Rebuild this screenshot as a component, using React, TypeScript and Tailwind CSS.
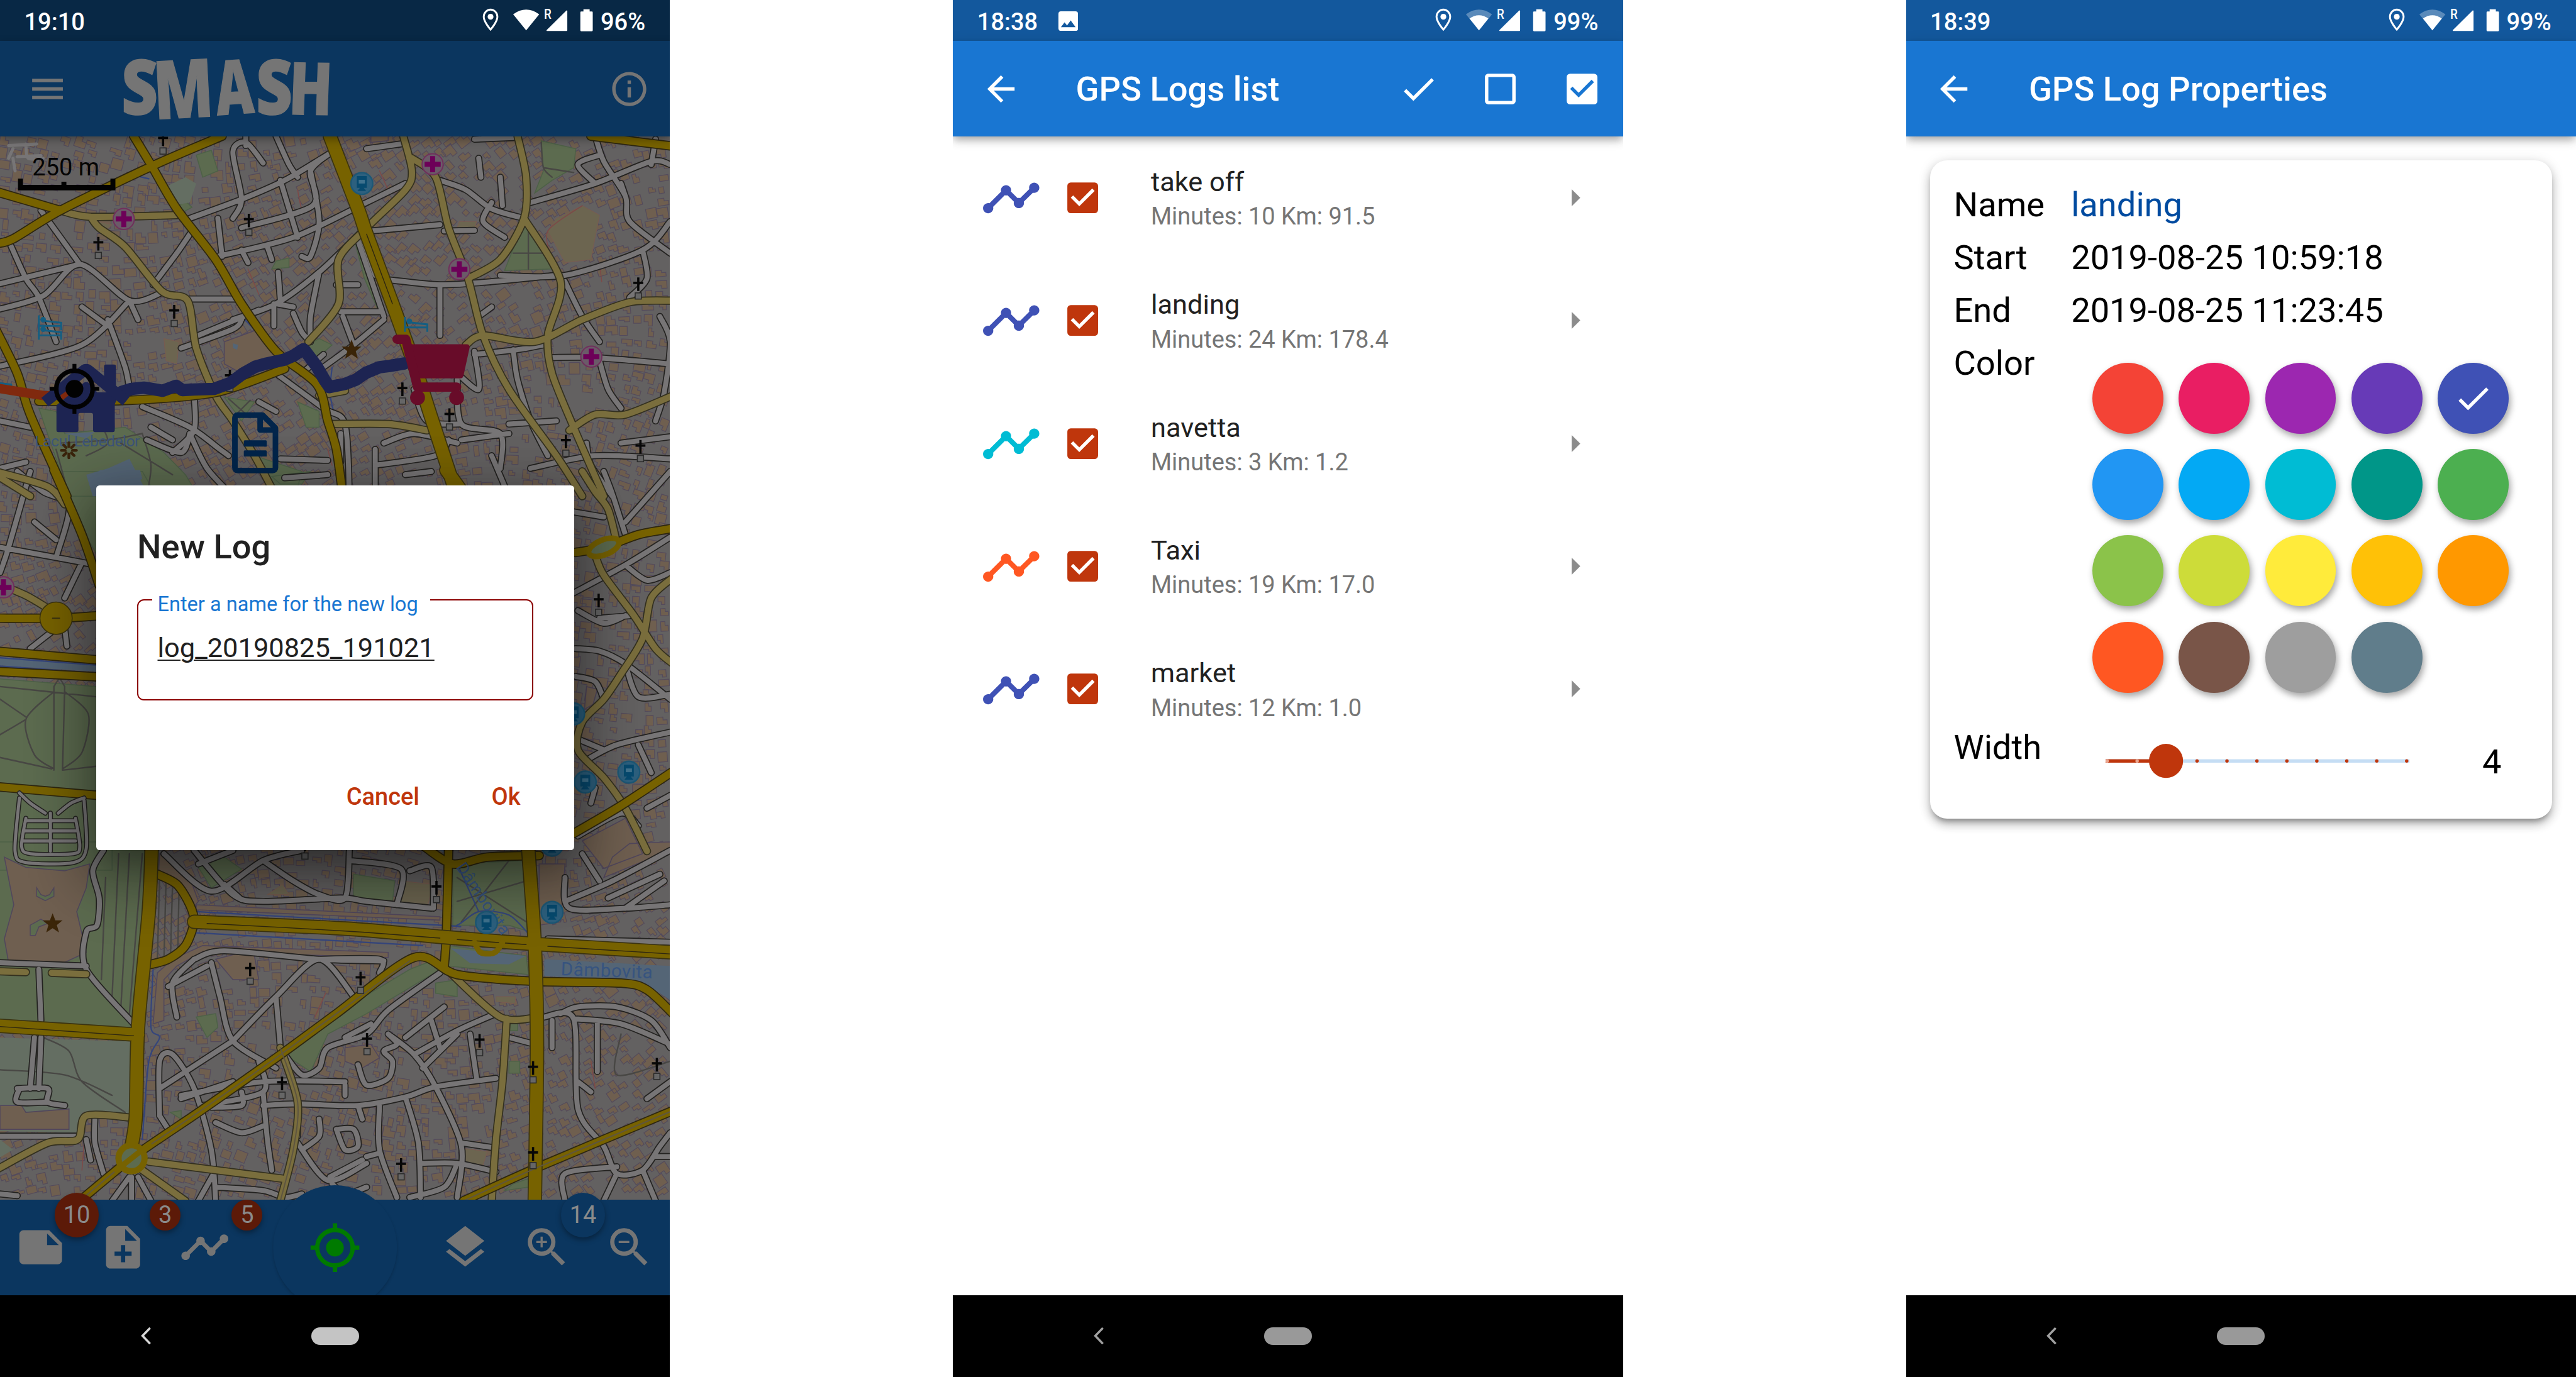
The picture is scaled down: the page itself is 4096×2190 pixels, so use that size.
import React from "react";
import {
  MdArrowBack,
  MdArrowRight,
  MdCheck,
  MdCheckBox,
  MdCheckBoxOutlineBlank,
  MdInfoOutline,
  MdLayers,
  MdMenu,
  MdMyLocation,
  MdNote,
  MdNoteAdd,
  MdTimeline,
  MdZoomIn,
  MdZoomOut,
} from "react-icons/md";

/* ---------- map geometry ---------- */

type Sheet = "A" | "B" | "C";

// Each survey sheet has its own digitising grid: x/y divisors and a y origin.
const SHEETS: Record<Sheet, [number, number, number]> = {
  A: [1.4385, 1.96, 0],
  B: [1.4385, 2.45, 760],
  C: [1.4385, 1.8233, 1360],
};

function pt(sheet: Sheet, x: number, y: number): [number, number] {
  const [sx, sy, oy] = SHEETS[sheet];
  return [x / sx, y / sy + oy];
}

const f = (n: number) => n.toFixed(1);

function curve(points: [number, number][]): string {
  let d = `M${f(points[0][0])} ${f(points[0][1])}`;
  for (let i = 0; i < points.length - 1; i++) {
    const p0 = points[i - 1] ?? points[i];
    const p1 = points[i];
    const p2 = points[i + 1];
    const p3 = points[i + 2] ?? p2;
    const k = 7;
    d += `C${f(p1[0] + (p2[0] - p0[0]) / k)} ${f(p1[1] + (p2[1] - p0[1]) / k)} ${f(
      p2[0] - (p3[0] - p1[0]) / k
    )} ${f(p2[1] - (p3[1] - p1[1]) / k)} ${f(p2[0])} ${f(p2[1])}`;
  }
  return d;
}

function parse(sheet: Sheet, s: string): [number, number][] {
  return s
    .trim()
    .split(/\s+/)
    .map((q) => {
      const [x, y] = q.split(",").map(Number);
      return pt(sheet, x, y);
    });
}

const lines = (sheet: Sheet, s: string) =>
  s
    .split("|")
    .map((l) => curve(parse(sheet, l)))
    .join("");

const areas = (sheet: Sheet, s: string) =>
  s
    .split("|")
    .map(
      (l) =>
        "M" +
        parse(sheet, l)
          .map((p) => `${f(p[0])} ${f(p[1])}`)
          .join("L") +
        "Z"
    )
    .join("");

const MINOR =
  lines(
    "A",
    `-10,980 100,935 185,835 300,950 375,925|185,835 95,665|300,950 190,1090 -10,1160|430,945 550,945|185,835 -10,900
    |20,760 60,880 90,940 130,1080|300,950 320,1010|250,1010 290,1160 300,1230|190,970 230,1010 250,1030|355,900 410,800 440,740
    |430,695 560,630 660,570 770,480|540,690 560,630 540,480 570,450 610,515|570,430 570,460|640,430 670,520 690,560|770,480 720,540 725,650 560,720 
    |505,810 680,750 850,640 940,580|505,690 515,810|560,790 575,830|650,570 690,750|620,780 630,820
    |540,1010 640,960 740,860 840,730|640,960 680,970|635,960 635,1030|740,860 720,1000 720,1080|645,860 650,950|680,990 700,1050 720,1080
    |780,900 830,900|790,985 880,985|820,1090 795,1000|890,1010 820,1090 750,1160|830,760 860,880 890,1000 |840,750 870,870
    |720,540 740,700 720,810 700,810|460,1060 600,980|420,1100 540,1040 560,1010
    |860,730 1020,710|1030,730 1100,728|905,885 1020,900 1140,890 1290,870|1020,900 1020,1060|1110,1000 1140,970
    |1110,500 1115,560|850,470 930,455|1020,570 1080,600 1140,660 1215,690|1140,640 1120,700 1170,750|1160,560 1165,650
    |1230,640 1380,580 1510,510 1554,520|1380,580 1340,520 1390,490|1380,430 1400,510 1450,620 1460,700 1554,800|1450,620 1440,580
    |1510,520 1520,440|1554,700 1490,790 1310,870 1160,870|1310,890 1350,1000 1390,1080|1490,790 1500,880 1460,940
    |1100,440 1190,435|1100,1120 1200,1105 1260,1090|1100,1110 1110,1230 1060,1180|1190,1105 1200,1200 1230,1330 1270,1440
    |1280,1130 1380,1130 1554,1150|1530,1000 1554,1080 1540,1240 1520,1330|1390,1140 1410,1230 1440,1290|960,1230 990,1330 1070,1340
    |1060,1200 1070,1340 1160,1370 1160,1480|1070,1390 1180,1370|1180,1340 1290,1330|890,1400 960,1370 1060,1400
    |0,1330 70,1350|0,1480 60,1460|330,1285 440,1350 510,1420 530,1440|450,1250 450,1360 400,1430|340,1390 420,1430 440,1370
    |440,1370 480,1480 540,1568|350,1350 400,1390|640,1180 750,1290 800,1340 810,1568|700,1180 750,1120|600,1270 640,1300
    |790,1370 790,1460|870,1420 870,1568|870,1470 1010,1440 1040,1390|940,1500 1000,1490|1230,1480 1380,1440 1554,1450|1360,1400 1370,1470 1420,1568
    |1140,1440 1180,1568|650,1450 760,1455|660,1510 760,1500|1440,1400 1554,1380`
  ) +
  lines(
    "B",
    `0,300 130,340 223,370|70,0 20,300 0,400|80,200 130,270|40,0 100,80 160,140 130,340|190,360 150,500|130,620 70,700|150,620 155,690
    |1330,480 1450,370 1554,260|1400,0 1420,90 1450,250|1340,550 1400,600 1450,570|1450,370 1500,430 1554,400|1460,570 1390,580
    |1335,700 1390,710 1450,760 1554,900|1450,760 1480,890 1554,880|1335,810 1380,830 1400,900|1360,1140 1430,1080 1554,1030|1480,1080 1510,1190
    |1330,1050 1400,1100|1500,1330 1554,1280|1554,0 1450,200|1330,160 1400,180|1370,1310 1380,1250|1340,1440 1440,1350 1480,1400`
  ) +
  lines(
    "C",
    `450,20 540,150 610,170 790,160 850,170 1000,190|380,30 490,140 610,50 700,20|610,50 680,110 740,150 800,160 810,20|810,50 930,75 920,180
    |950,80 1000,70 1005,190|520,120 560,165|540,20 460,60
    |450,340 520,315 740,340 890,345|450,340 400,410 410,510|490,350 510,450 540,580 640,660|480,360 390,420|540,580 640,450 740,340 820,450|540,580 370,720
    |640,450 650,600|740,340 880,340 880,380|420,740 610,700 800,700|470,770 610,730 600,640|370,800 370,640 400,620 450,720 490,900 500,1050
    |610,730 620,870 630,960|500,820 560,850 610,830|610,770 690,765 830,770 940,745 1010,715 1150,690|690,880 760,990 850,940|690,765 690,860
    |740,810 740,860 700,900|780,840 820,840 830,890 800,900 780,840|830,770 840,810|880,770 880,900 920,1040|850,920 880,910|940,745 970,880 975,1040
    |660,620 700,680 740,660 760,600 850,560 900,490 1020,380|800,570 860,530|830,650 850,710 900,690 910,640 890,610 920,590 900,560
    |900,560 960,620 1010,715 1070,890 1060,1040|940,570 1030,480|960,620 1060,550 1150,500|1000,520 1020,600|980,660 1060,560|1090,560 1105,690
    |1070,880 1150,895|980,940 1060,940 1150,965|1060,940 1030,1010 950,1040|765,980 840,930|770,1000 800,1030 850,1010
    |1180,570 1240,590|1260,510 1330,515 1340,780 1400,890 1430,970 1490,960 1530,890 1554,850|1330,515 1440,530 1554,590|1300,500 1340,480 1430,480 1510,520 1554,600
    |1280,520 1280,600|1385,520 1385,670|1500,750 1554,700|1340,700 1370,730|1310,1050 1310,970 1430,950|1400,1050 1430,970|1490,960 1520,1050|1554,920 1520,920
    |1310,100 1320,190 1450,190 1554,180|1310,170 1420,110 1554,20|1350,30 1390,110|1410,160 1530,90|1450,190 1540,110|1270,280 1554,290
    |240,20 215,80 230,160 225,240 200,260 200,370 310,530|0,350 200,360|90,370 95,520|80,570 70,720|95,570 90,720|40,720 110,720 110,760 150,770|45,720 40,760 110,760
    |0,860 180,860|220,810 220,880 240,970|200,870 210,930|300,980 260,1050|305,980 305,1050|320,980 350,1050|500,960 460,1050|0,1030 40,1035|420,750 540,700|800,710 800,740
    |390,840 370,800|560,730 560,770 490,775|700,1030 660,1040 610,1020 500,1010`
  );

const SECONDARY =
  lines(
    "A",
    `140,665 210,685 410,680|210,685 230,720 290,780 375,920 435,950 455,1100 500,1250 540,1330 590,1440 640,1568
    |935,430 955,540 940,600 850,720 785,820 785,960 715,1080|955,500 1010,560 1040,720 1085,880 1120,1060 1180,1230 1290,1440 1350,1568
    |1200,430 1220,560 1215,690 1160,820 1085,880|1215,690 1300,890 1270,1060 1280,1180 1330,1350 1400,1568
    |1080,1090 1120,1060 1240,1080 1350,1010 1460,955 1560,950|770,1340 900,1340 990,1360|1320,1360 1380,1310 1450,1310 1560,1250|-10,1500 70,1568|740,1250 800,1235`
  ) +
  lines(
    "B",
    `-10,0 110,60 150,130|1350,0 1380,80 1410,150 1430,280|1380,330 1400,410 1470,570 1520,700 1560,760
    |1560,420 1510,500 1490,660 1440,800 1400,900 1350,990 1340,1100 1400,1210 1450,1330 1500,1500|-10,440 60,490 110,540`
  ) +
  lines(
    "C",
    `1040,375 1160,510 1250,510|1175,515 1165,700 1150,870 1140,1050|345,935 500,960 655,985|650,600 690,760 680,900 650,1050
    |330,960 430,1050|-10,960 110,880 180,870 200,800 300,805|-10,375 60,378|120,380 200,384`
  );

const MAJOR_THIN =
  lines(
    "A",
    `310,430 352,525 410,660 500,820 560,960 640,1110 735,1215 760,1330 780,1420 795,1568|-10,770 30,755 140,665 352,525 515,430|-10,605 140,665
    |1370,430 1560,462|-10,1040 40,1180 70,1310 155,1568|90,1268 300,1265 500,1240 660,1165`
  ) +
  lines(
    "B",
    `125,-5 190,250 230,450|1335,320 1400,300 1480,250 1560,225|-10,580 130,580 230,570|-10,1245 230,1280|1330,1430 1440,1320 1560,1185|-10,710 230,745|-10,790 230,812`
  ) +
  lines(
    "C",
    `365,90 410,120 440,180 450,230 430,300 390,340 350,355|1040,20 1035,270 1030,360|985,10 1050,60 1130,40 1250,35
    |190,1045 310,920 460,790 640,630 780,500 960,335 1060,385 1240,405 1440,410 1500,430 1560,500|1075,1050 1250,950 1560,785`
  );

const MAJOR_WIDE =
  lines("A", "765,430 830,660 850,740 910,960 960,1150 1000,1320 1060,1568") +
  lines("B", "1035,-5 1075,90") +
  lines("C", "352,0 345,200 320,540 315,800 305,890|450,230 800,250 1030,275 1240,295 1560,320|1225,20 1240,300 1245,600 1240,1050|-10,535 320,562");

const PARK =
  areas(
    "A",
    `455,490 490,475 505,540 470,560|1255,445 1335,470 1330,530 1280,570 1240,610 1260,540|1215,700 1280,850 1170,855|520,1255 590,1270 560,1330
    |150,1370 290,1350 380,1430 430,1500 460,1568 160,1568 90,1290 130,1300|700,1100 740,1070 770,1090 720,1150|640,825 670,815 670,845 630,850
    |820,750 885,960 875,975 845,880|415,650 430,635 445,655 425,670|690,1270 740,1300 740,1350 710,1350|590,1440 700,1490 690,1540 620,1530`
  ) +
  areas("B", "130,0 330,0 350,60 250,60 250,400 180,200|-10,818 260,855 260,1270 -10,1238|-10,1260 260,1300 260,1575 -10,1575|630,20 720,0 700,50 650,50") +
  areas(
    "C",
    `-10,-5 350,-5 345,200 320,545 -10,520|660,620 700,560 950,370 1000,345 1020,370 850,500 760,560 720,670|1050,60 1220,50 1230,260 1180,240 1050,240
    |1040,300 1220,330 1225,385 1040,360|820,90 915,110 910,170 820,160|455,60 520,40 560,75 490,130|455,510 500,500 505,540 480,570|1010,410 1060,400 1060,450 1010,440
    |1180,520 1200,520 1200,550 1180,550|395,790 420,785 420,810|1180,640 1205,640 1205,675 1180,675|1190,1000 1225,985 1225,1010 1170,1020`
  );

const PALE_PARK = areas("C", "-10,570 320,582 300,800 190,790 180,850 -10,845|-10,860 30,900 -10,930") + areas("A", "430,560 455,580 440,640 400,650 385,590");

const BEIGE =
  areas("A", "520,1080 600,1040 640,1130 560,1180 520,1150|860,430 900,430 900,445 860,450") +
  areas("B", "1350,1460 1450,1370 1490,1510 1400,1568|1360,850 1385,860 1375,920 1355,940") +
  areas(
    "C",
    `10,40 60,70 150,80 208,60 200,130 178,200 200,320 140,355 20,350 10,280 32,180|800,600 860,590 880,630 840,660 800,640|500,340 560,320 590,330 600,400 540,400
    |370,30 440,100 460,170 440,200 400,110 368,80|1250,60 1310,60 1300,230 1250,240|1420,40 1460,0 1554,-5 1554,20 1400,100|0,770 50,770 60,790 160,780 160,840 0,840
    |455,180 1020,215 1020,225 455,195|365,380 400,340 470,300 900,320 900,335 470,318 410,360 380,400 380,520 355,530`
  );

const YELLOW_LOT =
  areas("A", "1290,690 1350,650 1390,680 1370,820 1310,830 1270,730|380,1070 415,1080 410,1150 385,1140|1065,700 1105,700 1100,725 1060,720|230,700 260,710 240,735") +
  areas("C", "930,110 1005,120 990,190 920,175|620,150 670,150 655,120|1070,895 1130,905 1120,945 1065,935|1150,450 1195,450 1195,470 1150,465");

const WATER =
  areas("A", "200,1500 250,1480 300,1450 345,1568 215,1568|540,1085 552,1090 550,1105 540,1100|150,1370 220,1365 200,1385") +
  areas("B", "230,-5 325,-5 330,30 300,55 260,55|-10,735 260,770 260,795 -10,765") +
  areas("C", "1262,340 1554,360 1554,460 1500,415 1440,400 1262,390|1045,308 1220,330 1180,355 1090,352|1100,270 1130,255 1165,270 1150,300 1115,300|1000,10 1060,10 1035,30");

const STREAM =
  lines("A", "770,1160 765,1240 775,1310|560,1000 640,1110|300,550 345,565|865,720 890,735") +
  lines("C", "455,200 1020,240 1060,240 1110,200 1180,210 1225,265|450,262 980,300|355,370 350,540 370,570 345,640 330,870|1060,60 1110,200") +
  lines("B", "-10,735 260,770|-10,768 260,800");

const PATHS =
  lines("A", "140,1400 250,1390 330,1370|230,1330 250,1400 200,1440|130,1420 160,1568|330,1370 350,1470 340,1568|280,1400 400,1500|530,1260 580,1320|580,1265 540,1320|1260,530 1330,545|1280,560 1260,530 1255,450|1225,700 1225,850|1190,800 1260,800") +
  lines(
    "B",
    "125,850 125,1180|150,850 145,1180|125,850 138,820 150,850|125,870 60,980 80,1120 125,1175|150,870 205,960 190,1110 145,1175|0,900 60,970|0,1040 60,980|0,1130 120,1175|223,1165 145,1180|0,850 223,890"
  ) +
  lines("C", "300,30 280,490|275,30 260,450|330,30 300,500|245,100 235,400|100,570 160,610 190,700 290,790|0,665 150,680 260,740|1060,100 1220,230|1180,50 1070,230|1060,170 1220,110|1440,560 1430,680 1554,640|370,100 365,340|385,110 380,345|400,120 395,340|415,140 412,330");

const RED_WALKS = lines("A", "690,600 700,660 720,670|880,540 900,600|1390,830 1395,890|575,850 600,930|770,1470 760,1420|1280,820 1270,730 1350,650") + lines("C", "755,440 730,510|195,880 190,960|1370,640 1380,720");

// Small footprints scattered on a jittered grid; the seed is fixed so the map never changes.
const HOUSES = (() => {
  let seed = 9241;
  const rnd = () => {
    seed = (seed * 1103515245 + 12345) & 0x7fffffff;
    return seed / 0x7fffffff;
  };
  let d = "";
  for (let y = 226; y < 1936; y += 19) {
    for (let x = 4; x < 1080; x += 20) {
      if (rnd() < 0.22) continue;
      const cx = x + rnd() * 7;
      const cy = y + rnd() * 7;
      const a = 0.5 * Math.sin(cx / 190 + cy / 330) - 0.25 + 0.15 * Math.sin(cy / 90);
      const w = 4 + rnd() * 6;
      const h = 4 + rnd() * 5.5;
      const cos = Math.cos(a);
      const sin = Math.sin(a);
      const n = rnd();
      const shape: [number, number][] =
        n < 0.5
          ? [[-w, -h], [w, -h], [w, h], [0, h], [0, h * 0.3], [-w, h * 0.3]]
          : n < 0.75
            ? [[-w, -h], [w, -h], [w, h], [-w, h]]
            : [[-w, -h], [w * 0.2, -h], [w * 0.2, -h * 0.2], [w, -h * 0.2], [w, h], [-w, h]];
      d += "M" + shape.map(([u, v]) => `${f(cx + u * cos - v * sin)} ${f(cy + u * sin + v * cos)}`).join("L") + "Z";
    }
  }
  return d;
})();

const CHURCHES: [Sheet, number, number][] = [
  ["A", 378, 440], ["A", 577, 697], ["A", 228, 770], ["A", 404, 985], ["A", 1480, 898], ["A", 933, 1230],
  ["A", 1042, 1312], ["A", 1312, 1395], ["A", 1485, 1412], ["A", 533, 1190], ["B", 1388, 510], ["C", 707, 2],
  ["C", 1012, 130], ["C", 580, 370], ["C", 836, 397], ["C", 851, 577], ["C", 1112, 580], ["C", 1236, 660],
  ["C", 1523, 650], ["C", 654, 705], ["C", 930, 945], ["C", 1236, 912],
];
const CLINICS: [Sheet, number, number][] = [["A", 1003, 519], ["A", 287, 692], ["A", 1065, 851], ["A", 1371, 1127], ["B", 8, 458]];
const TRAMS: [Sheet, number, number][] = [
  ["A", 839, 580], ["B", 1330, 958], ["B", 1458, 1188], ["B", 1357, 1227], ["C", 1280, 5], ["C", 1128, 232], ["C", 1280, 202],
];
const HOTELS: [Sheet, number, number][] = [["A", 116, 1020], ["A", 116, 1050], ["A", 965, 1025], ["A", 0, 1215]];
const STARS: [Sheet, number, number][] = [["A", 815, 1106], ["C", 122, 236]];

const at = ([s, x, y]: [Sheet, number, number]) => {
  const [px, py] = pt(s, x, y);
  return `translate(${f(px)} ${f(py)})`;
};

function Road({ d, width, fill, casing }: { d: string; width: number; fill: string; casing: string }) {
  return (
    <>
      <path d={d} stroke={casing} strokeWidth={width + 3.4} />
      <path d={d} stroke={fill} strokeWidth={width} />
    </>
  );
}

function CityMap() {
  const [rx, ry] = pt("C", 305, 925);
  const [qx, qy] = pt("B", 130, 580);
  return (
    <svg viewBox="0 220 1080 1714" className="block h-full w-full" fontFamily="Roboto, sans-serif">
      <rect x="0" y="220" width="1080" height="1716" fill="#636161" />
      <path d={HOUSES} fill="#6f5f4f" stroke="#544b5c" strokeWidth="1.2" />
      <path d={PARK} fill="#5c6b4f" stroke="#4d6147" strokeWidth="1.5" />
      <path d={PALE_PARK} fill="#646e62" />
      <path d={YELLOW_LOT} fill="#6c6550" stroke="#7a5a50" strokeWidth="1" />
      <path d={BEIGE} fill="#6f5f50" stroke="#51475c" strokeWidth="1.6" />
      <path d={WATER} fill="#546576" />
      <path d={areas("C", "85,130 85,155 105,168 125,155 125,130 115,150 105,155 95,150|70,270 70,240 95,222 110,235 90,245 82,270")} fill="#5c6b4f" stroke="#51475c" strokeWidth="1.5" />
      <g fill="none" strokeLinecap="round" strokeLinejoin="round">
        <path d={PATHS} stroke="#484744" strokeWidth="2.4" />
        <path d={RED_WALKS} stroke="#7d4a48" strokeWidth="1.6" />
        <path d={STREAM} stroke="#34457c" strokeWidth="2.2" />
        <Road d={MINOR} width={8} fill="#777576" casing="#232220" />
        <Road d={SECONDARY} width={10} fill="#7a6e3d" casing="#33301f" />
        <Road d={MAJOR_THIN} width={12} fill="#776200" casing="#2e2710" />
        <Road d={MAJOR_WIDE} width={20} fill="#776200" casing="#3b3310" />
        <path d={lines("C", "190,1045 310,920 460,790 640,630 780,500 950,345|1075,1050 1250,950 1560,785|650,600 690,760 680,900 650,1050")} stroke="#5e5540" strokeWidth="2" />
        <path d={lines("C", "480,235 800,257 1020,278|1060,282 1220,297|1270,302 1560,325|-10,537 310,565") + lines("A", "850,740 910,960")} stroke="#2e2710" strokeWidth="1.4" />
        <circle cx={rx} cy={ry} r="21" fill="#5c6b4f" stroke="#776200" strokeWidth="10" />
        <path d={lines("C", "270,960 345,885")} stroke="#776200" strokeWidth="9" />
        <circle cx={qx} cy={qy} r="26" fill="#776200" stroke="#3b3310" strokeWidth="1.5" />
        <path d={lines("B", "122,580 138,580")} stroke="#3b3310" strokeWidth="2" />
        <path d={lines("C", "1100,290 1112,318 1130,324 1150,318 1165,290")} stroke="#776200" strokeWidth="9" />
        <ellipse cx={pt("B", 1400, 300)[0]} cy={pt("B", 1400, 300)[1]} rx="26" ry="12" transform={`rotate(-22 ${f(pt("B", 1400, 300)[0])} ${f(pt("B", 1400, 300)[1])})`} fill="#5c6b4f" stroke="#776200" strokeWidth="9" />
        <g strokeWidth="5" stroke="#777576">
          <path d={lines("B", "45,1270 70,1310 105,1350|195,1290 165,1310 135,1350|45,1290 35,1500 60,1545 170,1545 200,1490 195,1300|60,1370 50,1480 70,1510 170,1510 185,1480 175,1370|60,1380 170,1380|58,1420 175,1420|55,1460 175,1460|117,1350 117,1500")} stroke="#232220" strokeWidth="8" />
          <path d={lines("B", "45,1270 70,1310 105,1350|195,1290 165,1310 135,1350|45,1290 35,1500 60,1545 170,1545 200,1490 195,1300|60,1370 50,1480 70,1510 170,1510 185,1480 175,1370|60,1380 170,1380|58,1420 175,1420|55,1460 175,1460|117,1350 117,1500")} />
          <path d={lines("A", "20,460 85,455|20,500 30,470|60,455 65,500 100,500|30,500 35,540|40,495 95,492")} />
        </g>
      </g>

      <g fill="#37547f" fontSize="25" letterSpacing="0.5">
        <text x={pt("C", 1300, 390)[0]} y={pt("C", 1300, 387)[1]} fontSize="30" transform="rotate(2 903 1572)">
          Dâmbovita
        </text>
        <text transform={`translate(${f(pt("C", 1056, 70)[0])} ${f(pt("C", 1056, 70)[1])}) rotate(56)`} fontSize="27">
          Dâmbovita
        </text>
        <text x="56" y="720" fontSize="25" fill="#3d5478" textLength="170">
          Lacul Lebedelor
        </text>
      </g>

      {CHURCHES.map((c, i) => (
        <g key={i} transform={at(c)}>
          <path d="M-1.8-11h3.6v7H8v3.8H1.8V11h-3.6V-.2H-8V-4h6.2z" fill="#070707" />
          <rect x="-5" y="14" width="10" height="10" fill="#666" stroke="#2b2b2b" strokeWidth="1.6" />
        </g>
      ))}
      {CLINICS.map((c, i) => (
        <g key={i} transform={at(c)}>
          <circle r="17" fill="#6b5a68" stroke="#70305c" strokeWidth="2" />
          <path d="M-4-13h8v9h9v8H4v9h-8V4h-9v-8h9z" fill="#6d0058" />
        </g>
      ))}
      {TRAMS.map((c, i) => (
        <g key={i} transform={at(c)}>
          <circle r="17.5" fill="#2d607e" stroke="#1d5876" strokeWidth="2.5" />
          <path d="M-8-12h16v19H-8zM-7 12l4-5h6l4 5z" fill="#074a6f" />
          <path d="M-5-6h10v6H-5z" fill="#3f728e" />
        </g>
      ))}
      {HOTELS.map((c, i) => (
        <g key={i} transform={at(c)} fill="none" stroke="#145e82" strokeWidth="3">
          <path d="M-18-12V12M-18 5H18V12M18 5V0L-8-3" />
          <circle cx="-11" cy="-5" r="3" fill="#145e82" />
        </g>
      ))}
      {STARS.map((c, i) => (
        <path key={i} transform={at(c)} d="M0-17L4.400-5.500H16L6.800 2 10.300 14 0 7-10.300 14-6.800 2-16-5.500H-4.400z" fill="#3b2508" />
      ))}
      <g transform="translate(111 726)" stroke="#3a240c" strokeWidth="4.500" strokeLinecap="round">
        {[0, 45, 90, 135, 180, 225, 270, 315].map((r) => (
          <path key={r} d="M0-6V-12" transform={`rotate(${r})`} />
        ))}
      </g>

      {/* recorded tracks */}
      <g fill="none" strokeLinecap="round" strokeLinejoin="round">
        <path d="M-10 625L40 633 72 638 100 637 118 622" stroke="#80290e" strokeWidth="15" />
        <path
          d="M196 632L212 627 232 625 262 630 284 622 294 629 312 628 345 627 372 617 392 602 412 591 430 586 458 580 474 573 489 563 492 566 510 590 524 614 531 624 556 619 574 612 590 601 612 592 628 590 652 586"
          stroke="#1d2452"
          strokeWidth="20"
        />
      </g>

      {/* market */}
      <g fill="#680c29">
        <path d="M652 555H752q5 0 5 5L747 606q-1 4-5 4H664z" />
        <path d="M640 547H654L673 624H736" fill="none" stroke="#680c29" strokeWidth="15" strokeLinecap="round" strokeLinejoin="round" />
        <circle cx="673" cy="641" r="12" />
        <circle cx="736" cy="641" r="12" />
      </g>

      {/* home, position and note markers */}
      <g transform="translate(60 520) scale(.3333)">
        <path d="M93 520V400L225 292q12-9 24 0L290 338H400L375 395V520q0 10-10 10H280q-10 0-10-10V447q0-10-10-10H209q-10 0-10 10V520q0 10-10 10H103q-10 0-10-10z" fill="#1d2452" />
        <path d="M323 213q0-10 10-10H371q10 0 10 10V350L323 300z" fill="#1d2452" />
        <path d="M37 385L226 232q11-9 22 0L430 380" fill="none" stroke="#1d2452" strokeWidth="54" strokeLinejoin="round" />
        <path d="M118 362L150 340" stroke="#80290e" strokeWidth="24" />
        <circle cx="180" cy="321" r="88" fill="none" stroke="#020202" strokeWidth="22" />
        <circle cx="180" cy="321" r="43" fill="#020202" />
        <path d="M180 200V240M180 402V441M60 321H90M270 321H300" stroke="#020202" strokeWidth="19" />
        <g fill="none" stroke="#02254b" strokeWidth="27" strokeLinejoin="round">
          <path d="M970 448H1090L1152 510V702q0 14-14 14H970q-14 0-14-14V462q0-14 14-14z" />
          <path d="M1078 450V520H1150" />
        </g>
        <path d="M1004 570H1105q5 0 5 5V600H999V575q0-5 5-5zM1004 618H1105q5 0 5 5V648H999V623q0-5 5-5z" fill="#02254b" />
      </g>

      {/* scale bar */}
      <path d="M29 288h8v10h62v-5h8v5h71v-10h8v19H29z" fill="#020202" />
      <text x="52" y="283" fontSize="38.500" fill="#050505">
        250 m
      </text>
    </svg>
  );
}

/* ---------- shared chrome ---------- */

function StatusIcons({ weak }: { weak?: boolean }) {
  return (
    <svg viewBox="770 0 192 66" className="h-6 w-[69.820px]" fill="#fff">
      <path d="M790.300 15.500a11 11.500 0 0 0-11 11.700c0 8 11 20.500 11 20.500s11-12.500 11-20.500a11 11.500 0 0 0-11-11.700z" fill="none" stroke="#fff" strokeWidth="3" />
      <circle cx="790.300" cy="27" r="4.700" />
      {weak ? (
        <>
          <path d="M847.700 49L826.700 23q21-15 42 0z" opacity=".3" />
          <path d="M847.700 49L832.500 30q15.200-11 30.400 0z" />
        </>
      ) : (
        <path d="M847.700 49L826.700 23q21-15 42 0z" />
      )}
      <text x="876.500" y="30" fontSize="22" fontFamily="Roboto, sans-serif" textLength="12" lengthAdjust="spacingAndGlyphs">
        R
      </text>
      <path d="M914 18.500V49q0 1-1 1H882q-2.500 0-1-1.800L912.500 17q1.500-1 1.500 1.500z" />
      <path d="M940 15h10v3.500h3.500q1.500 0 1.500 1.500v29q0 1.500-1.500 1.500h-17q-1.500 0-1.500-1.500V20q0-1.500 1.500-1.500h3.500z" />
    </svg>
  );
}

function StatusBar({ time, level, weak, photo, tone }: { time: string; level: string; weak?: boolean; photo?: boolean; tone: string }) {
  return (
    <div className={`flex h-6 shrink-0 items-center pt-[1.500px] pr-[14.500px] pl-[14.200px] text-[14px] leading-none font-medium text-white ${tone}`}>
      <span>{time}</span>
      {photo && (
        <svg viewBox="0 0 32 32" className="-mt-px ml-[12.200px] size-[11.500px]">
          <path fillRule="evenodd" fill="#fff" d="M4 0h24q4 0 4 4v24q0 4-4 4H4q-4 0-4-4V4q0-4 4-4zM4 26h24l-8-11-6 8-4-5z" />
        </svg>
      )}
      <span className="-mt-[1.500px] ml-auto">
        <StatusIcons weak={weak} />
      </span>
      <span className="ml-[2px]">{level}</span>
    </div>
  );
}

function NavBar({ pill, arrow }: { pill: string; arrow: string }) {
  return (
    <div className="relative z-10 grid h-12 shrink-0 grid-cols-[171.400px_50px_1fr] items-center bg-black">
      <svg viewBox="0 0 16 27" className={`ml-[82.500px] h-[10px] w-[6px] ${arrow}`} fill="none" stroke="currentColor" strokeWidth="3.500">
        <path d="M14.500 1L2.500 13.500 14.500 26" />
      </svg>
      <span className={`mx-auto h-[10.200px] w-7 rounded-full ${pill}`} />
    </div>
  );
}

function Phone({ children }: { children: React.ReactNode }) {
  return <section className="relative flex h-full w-[392.730px] shrink-0 flex-col overflow-hidden bg-white">{children}</section>;
}

function Slot({ children }: { children: React.ReactNode }) {
  return <span className="relative flex h-full w-12 shrink-0 items-center justify-center">{children}</span>;
}

function TitleBar({ title, children }: { title: string; children?: React.ReactNode }) {
  return (
    <header className="relative z-10 flex h-14 shrink-0 items-center bg-[#1976d2] text-white shadow-[0_2px_4px_-1px_rgba(0,0,0,0.2),0_3px_5px_0_rgba(0,0,0,0.14),0_1px_8px_0_rgba(0,0,0,0.1)]">
      <span className="flex w-14 justify-center">
        <MdArrowBack size={24} />
      </span>
      <h1 className="flex-1 pt-[0.400px] pl-4 text-xl font-medium">{title}</h1>
      <div className="flex h-full">{children}</div>
    </header>
  );
}

/* ---------- screen 1: map with dialog ---------- */

const LOGO = [
  { c: "S", x: 196, y: 185, w: 59, s: 122, t: "" },
  { c: "M", x: 248, y: 190, w: 96, s: 130, t: "rotate(-3 295 145)" },
  { c: "A", x: 348, y: 184, w: 61, s: 121, t: "rotate(-4 378 145)" },
  { c: "S", x: 413, y: 185, w: 59, s: 122, t: "" },
  { c: "H", x: 469, y: 185, w: 70, s: 117, t: "rotate(1 505 145) skewX(-1)" },
];

function Logo() {
  return (
    <svg viewBox="190 66 360 154" className="h-14 w-[130.900px] overflow-visible" fontFamily="Open Sans, sans-serif" fontWeight="800" fill="#757575" stroke="#757575" strokeWidth="1.500">
      {LOGO.map((l, i) => (
        <text key={i} x={l.x} y={l.y} fontSize={l.s} textLength={l.w} lengthAdjust="spacingAndGlyphs" transform={l.t || undefined}>
          {l.c}
        </text>
      ))}
    </svg>
  );
}

function Badge({ children, wide, tone }: { children: React.ReactNode; wide?: boolean; tone: string }) {
  return (
    <span
      className={`absolute flex items-center justify-center rounded-full text-[14px] leading-none text-[#8a8a8a] shadow-[0_1.500px_3px_rgba(0,0,0,0.35)] ${tone} ${
        wide ? "-top-[4px] left-[32px] size-[26px]" : "top-0 left-[39.800px] size-[18px]"
      }`}
    >
      {children}
    </span>
  );
}

function NewLogDialog() {
  return (
    <div className="absolute top-[284.500px] left-[56.400px] z-20 flex h-[214px] w-[280px] flex-col rounded-[2px] bg-white px-6 shadow-[0_11px_15px_-7px_rgba(0,0,0,0.2),0_14px_38px_3px_rgba(0,0,0,0.28),0_9px_30px_8px_rgba(0,0,0,0.2)]">
      <h2 className="mt-6 text-xl leading-6 font-medium text-[#212121]">New Log</h2>
      <fieldset className="mt-[13.300px] h-[65px] rounded-[4px] border-[0.900px] border-[#8b0000] pl-[11.200px]">
        <legend className="-ml-[3px] px-[3px] pr-[7px] text-xs leading-[12px] text-[#1976d2]">
          <span className="relative top-[2.700px]">Enter a name for the new log</span>
        </legend>
        <p className="mt-[12.300px] text-base leading-5 text-[#212121] underline decoration-[0.800px] underline-offset-[1.500px]">log_20190825_191021</p>
      </fieldset>
      <div className="mt-[48.400px] flex justify-end gap-[42.200px] pr-[7.400px] text-[14px] leading-4 font-medium text-[#bf360c]">
        <span>Cancel</span>
        <span>Ok</span>
      </div>
    </div>
  );
}

function MapScreen() {
  return (
    <Phone>
      <StatusBar time="19:10" level="96%" tone="bg-[#082845]" />
      <header className="relative z-10 flex h-14 shrink-0 items-center bg-[#0b365f] text-[#757575] shadow-[0_2px_5px_rgba(0,0,0,0.35)]">
        <span className="flex w-14 justify-center">
          <MdMenu size={24} />
        </span>
        <span className="ml-[13px] flex-1">
          <Logo />
        </span>
        <Slot>
          <MdInfoOutline size={24} />
        </Slot>
      </header>
      <div className="h-[623.270px] shrink-0">
        <CityMap />
      </div>
      <footer className="relative z-[5] flex h-14 shrink-0 items-center justify-between bg-[#0b365f] text-[#757575]">
        <div className="relative z-10 flex h-full">
          <Slot>
            <MdNote size={30} />
            <Badge wide tone="bg-[#5c1a08]">10</Badge>
          </Slot>
          <Slot>
            <MdNoteAdd size={30} />
            <Badge tone="bg-[#5c1a08]">3</Badge>
          </Slot>
          <Slot>
            <MdTimeline size={30} />
            <Badge tone="bg-[#5c1a08]">5</Badge>
          </Slot>
        </div>
        <span className="absolute top-[-8.400px] left-1/2 flex size-[72.800px] -translate-x-1/2 items-center justify-center rounded-full bg-[#0b365f] text-[#007a00] shadow-[0_1px_1.500px_rgba(0,0,0,0.18)]">
          <MdMyLocation size={31.2} />
        </span>
        <div className="flex h-full">
          <Slot>
            <MdLayers size={30} />
          </Slot>
          <Slot>
            <MdZoomIn size={30} />
            <Badge wide tone="bg-[#0b365f]">14</Badge>
          </Slot>
          <Slot>
            <MdZoomOut size={30} />
          </Slot>
        </div>
      </footer>
      <NavBar pill="bg-[#c4c4c4]" arrow="text-[#d8d8d8]" />
      <NewLogDialog />
    </Phone>
  );
}

/* ---------- screen 2: log list ---------- */

const LOGS = [
  { name: "take off", info: "Minutes: 10 Km: 91.5", color: "#3f51b5" },
  { name: "landing", info: "Minutes: 24 Km: 178.4", color: "#3f51b5" },
  { name: "navetta", info: "Minutes: 3 Km: 1.2", color: "#00bcd4" },
  { name: "Taxi", info: "Minutes: 19 Km: 17.0", color: "#ff5722" },
  { name: "market", info: "Minutes: 12 Km: 1.0", color: "#3f51b5" },
];

function ListScreen() {
  return (
    <Phone>
      <StatusBar time="18:38" level="99%" weak photo tone="bg-[#13589d]" />
      <TitleBar title="GPS Logs list">
        <Slot>
          <MdCheck size={24} />
        </Slot>
        <Slot>
          <MdCheckBoxOutlineBlank size={24} />
        </Slot>
        <Slot>
          <MdCheckBox size={24} />
        </Slot>
      </TitleBar>
      <ul className="flex-1">
        {LOGS.map((log) => (
          <li key={log.name} className="flex h-[72px] items-center px-4">
            <MdTimeline size={36} color={log.color} />
            <Slot>
              <MdCheckBox size={24} color="#bf360c" />
            </Slot>
            <div className="flex-1 pt-[2px] pl-4">
              <p className="text-base leading-5 text-[#212121]">{log.name}</p>
              <p className="text-sm leading-5 text-[#757575]">{log.info}</p>
            </div>
            <MdArrowRight size={24} color="#8c8c8c" />
          </li>
        ))}
      </ul>
      <NavBar pill="bg-[#999999]" arrow="text-[#a0a0a0]" />
    </Phone>
  );
}

/* ---------- screen 3: log properties ---------- */

const SWATCHES = [
  "bg-[#f44336]", "bg-[#e91e63]", "bg-[#9c27b0]", "bg-[#673ab7]", "bg-[#3f51b5]",
  "bg-[#2196f3]", "bg-[#03a9f4]", "bg-[#00bcd4]", "bg-[#009688]", "bg-[#4caf50]",
  "bg-[#8bc34a]", "bg-[#cddc39]", "bg-[#ffeb3b]", "bg-[#ffc107]", "bg-[#ff9800]",
  "bg-[#ff5722]", "bg-[#795548]", "bg-[#9e9e9e]", "bg-[#607d8b]",
];

function WidthSlider() {
  return (
    <svg viewBox="320 1190 500 74" className="h-[26.900px] w-[181.800px]">
      <rect x="322" y="1224" width="490" height="5.500" fill="#c5ddf4" />
      <rect x="322" y="1224" width="98" height="5.500" fill="#bf360c" />
      {Array.from({ length: 11 }, (_, i) => (
        <circle key={i} cx={324.500 + i * 48.300} cy="1226.700" r="2.750" fill={i < 2 ? "#eba58e" : "#bf360c"} />
      ))}
      <circle cx="419.400" cy="1226.700" r="27.500" fill="#bf360c" />
    </svg>
  );
}

function PropertiesScreen() {
  return (
    <Phone>
      <StatusBar time="18:39" level="99%" weak tone="bg-[#13589d]" />
      <TitleBar title="GPS Log Properties" />
      <div className="flex-1">
        <div className="mx-[14px] mt-[14px] h-[386px] rounded-[10px] bg-white px-[14px] pt-[10.700px] text-xl leading-[31px] text-black shadow-[0_3px_3px_-2px_rgba(0,0,0,0.3),0_3px_6px_0_rgba(0,0,0,0.24),0_1px_8px_0_rgba(0,0,0,0.1)]">
          <dl className="grid grid-cols-[68.800px_1fr]">
            <dt>Name</dt>
            <dd className="text-[#004ba0]">landing</dd>
            <dt>Start</dt>
            <dd>2019-08-25 10:59:18</dd>
            <dt>End</dt>
            <dd>2019-08-25 11:23:45</dd>
            <dt>Color</dt>
            <dd>
              <div className="grid grid-cols-[repeat(5,41.600px)] gap-[9px] pt-[15px] pl-[12.500px]">
                {SWATCHES.map((tone, i) => (
                  <span
                    key={tone}
                    className={`flex size-[41.600px] items-center justify-center rounded-full text-white shadow-[1px_2px_4px_rgba(0,0,0,0.36)] ${tone}`}
                  >
                    {i === 4 && <MdCheck size={24} />}
                  </span>
                ))}
              </div>
            </dd>
          </dl>
          <div className="mt-[16.600px] flex h-[31px]">
            <span className="w-[88.200px]">Width</span>
            <span className="pt-[10px]">
              <WidthSlider />
            </span>
            <span className="mt-[8.800px] ml-[39.800px]">4</span>
          </div>
        </div>
      </div>
      <NavBar pill="bg-[#999999]" arrow="text-[#a0a0a0]" />
    </Phone>
  );
}

export default function App() {
  return (
    <main className="h-screen w-screen overflow-hidden bg-white font-[Roboto,sans-serif]">
      <div className="flex h-[807.270px] w-[1509.820px] justify-between [zoom:2.7129]">
        <MapScreen />
        <ListScreen />
        <PropertiesScreen />
      </div>
    </main>
  );
}
